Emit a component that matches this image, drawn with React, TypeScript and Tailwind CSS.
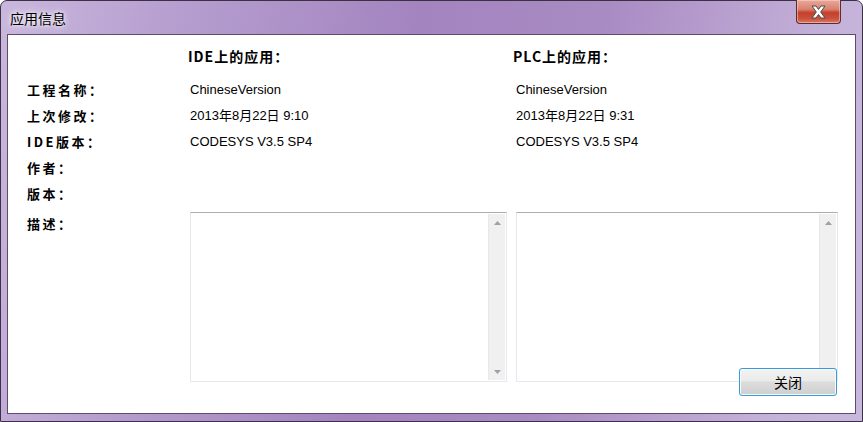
import React from 'react';

const cjk = { fontFamily: '"Liberation Sans", "Noto Sans CJK SC", sans-serif' };
const bold = { fontFamily: '"Noto Sans CJK SC", sans-serif' };

function Scrollbar({ showDown = true }: { showDown?: boolean }) {
  return (
    <div className="flex w-[17px] flex-col justify-between border-l border-[#e8e8e8] bg-[#f0f0f0]">
      <div className="flex h-[17px] items-center justify-center">
        <svg width="7" height="4" viewBox="0 0 7 4">
          <path d="M0 4 L3.5 0 L7 4 Z" fill="#a0a0a0" />
        </svg>
      </div>
      {showDown && (
        <div className="flex h-[17px] items-center justify-center">
          <svg width="7" height="4" viewBox="0 0 7 4">
            <path d="M0 0 L7 0 L3.5 4 Z" fill="#a0a0a0" />
          </svg>
        </div>
      )}
    </div>
  );
}

function Memo({ width, showDown }: { width: string; showDown?: boolean }) {
  return (
    <div
      className={`flex h-[170px] ${width} justify-end border border-[#e3e9ef] border-t-[#abadb3] bg-white p-px`}
    >
      <Scrollbar showDown={showDown} />
    </div>
  );
}

export default function App() {
  const labels = ['工程名称：', '上次修改：', 'IDE版本：', '作者：', '版本：'];
  const ide = ['ChineseVersion', '2013年8月22日 9:10', 'CODESYS V3.5 SP4', '', ''];
  const plc = ['ChineseVersion', '2013年8月22日 9:31', 'CODESYS V3.5 SP4', '', ''];

  return (
    <div className="h-[422px] w-[863px] bg-white">
      <div className="flex h-full w-full flex-col rounded-t-[7px] border border-[#3b3044] bg-[linear-gradient(100deg,#c9b7dd_0%,#b59dcf_20%,#a384bf_45%,#a98bc3_65%,#c5b2da_90%,#c9b8dd_100%)] px-[6px] pb-[7px]">
        {/* Title bar */}
        <div className="relative flex h-[33px] shrink-0 items-center">
          <span
            className="pl-[3px] pt-[1px] text-[14px] text-black [text-shadow:0_0_8px_#ffffff,0_0_4px_#ffffff]"
            style={bold}
          >
            应用信息
          </span>
          <div className="absolute right-[15px] top-[-1px] flex h-[24px] w-[45px] items-center justify-center rounded-b-[4px] border border-t-0 border-[#5a2b2f] bg-[linear-gradient(180deg,#e9a99c_0%,#d9826f_40%,#c4412c_55%,#c9503c_80%,#da7a66_100%)] shadow-[inset_0_0_0_1px_rgba(255,220,210,0.5)]">
            <svg width="17" height="14" viewBox="0 0 17 14">
              <path
                d="M2 1 H6 L8.5 4.5 L11 1 H15 L10.7 7 L15 13 H11 L8.5 9.5 L6 13 H2 L6.3 7 Z"
                fill="#ffffff"
                stroke="#4a4a4a"
                strokeWidth="1"
                strokeLinejoin="round"
              />
            </svg>
          </div>
        </div>

        {/* Client area */}
        <div className="relative flex-1 border border-[#5b4e66] bg-white pt-[8px]">
          <div className="flex h-[26px] items-center text-[14px] font-bold text-black" style={bold}>
            <div className="w-[180px]" />
            <div className="w-[325px] tracking-[1px]">IDE上的应用：</div>
            <div className="tracking-[1px]">PLC上的应用：</div>
          </div>

          <div className="mt-[8px] flex flex-col">
            {labels.map((l, i) => (
              <div key={l} className="flex h-[26px] items-center">
                <div className="w-[182px] pl-[19px] text-[13px] font-bold tracking-[2.5px] text-black" style={bold}>
                  {l}
                </div>
                <div className="w-[326px] text-[13px] text-black" style={cjk}>
                  {ide[i]}
                </div>
                <div className="text-[13px] text-black" style={cjk}>
                  {plc[i]}
                </div>
              </div>
            ))}
          </div>

          <div className="mt-[5px] flex items-start">
            <div
              className="flex h-[24px] w-[182px] items-center pl-[19px] text-[13px] font-bold tracking-[2.5px] text-black"
              style={bold}
            >
              描述：
            </div>
            <Memo width="w-[317px]" />
            <div className="w-[9px]" />
            <Memo width="w-[322px]" showDown={false} />
          </div>

          <button
            className="absolute bottom-[17px] right-[18px] flex h-[28px] w-[98px] items-center justify-center rounded-[3px] border border-[#3c9ad8] bg-[linear-gradient(180deg,#f2f2f2_0%,#ebebeb_45%,#dddddd_50%,#cfcfcf_100%)] text-[14px] text-black shadow-[inset_0_0_0_1px_#f6fbfe]"
            style={bold}
          >
            关闭
          </button>
        </div>
      </div>
    </div>
  );
}
